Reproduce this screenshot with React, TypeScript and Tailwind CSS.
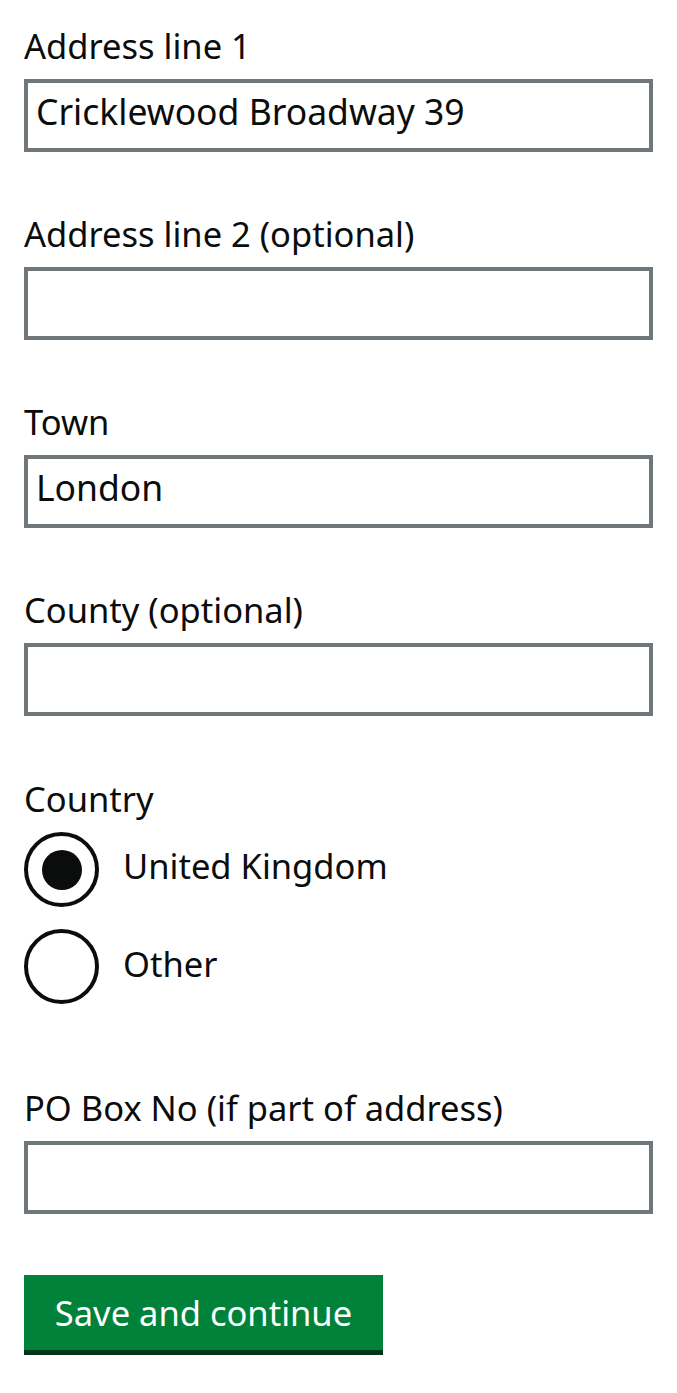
import React from 'react';

const font = { fontFamily: '"Noto Sans", Arial, sans-serif' };

function TextField({ label, value, className }: { label: string; value?: string; className?: string }) {
  return (
    <div className={className}>
      <label className="block text-[34.5px] leading-[44px] text-[#0b0c0c]">{label}</label>
      <input
        type="text"
        defaultValue={value}
        className="mt-[11px] block h-[73px] w-full border-4 border-[#6f777b] bg-white px-[8px] pt-0 pb-[9px] text-[35.5px] leading-[44px] text-[#0b0c0c] outline-none"
      />
    </div>
  );
}

function Radio({ label, checked, textClass }: { label: string; checked?: boolean; textClass: string }) {
  return (
    <div className="flex h-[75px] items-center">
      <div className="flex h-[75px] w-[75px] shrink-0 items-center justify-center rounded-full border-4 border-[#0b0c0c] bg-white">
        {checked && <div className="h-[40px] w-[40px] rounded-full bg-[#0b0c0c]" />}
      </div>
      <span className={`ml-[24px] text-[34.5px] leading-[44px] text-[#0b0c0c] ${textClass}`}>{label}</span>
    </div>
  );
}

export default function App() {
  return (
    <div className="min-h-screen bg-white px-[24px] pt-[24px] pb-[38px]" style={font}>
      <TextField label="Address line 1" value="Cricklewood Broadway 39" />
      <TextField label="Address line 2 (optional)" className="mt-[60px]" />
      <TextField label="Town" value="London" className="mt-[60px]" />
      <TextField label="County (optional)" className="mt-[60px]" />

      {/* Country */}
      <div className="mt-[61px]">
        <div className="text-[34.5px] leading-[44px] text-[#0b0c0c]">Country</div>
        <div className="mt-[11px] flex flex-col gap-[22px]">
          <Radio label="United Kingdom" checked textClass="pb-[8px]" />
          <Radio label="Other" textClass="pb-[6px]" />
        </div>
      </div>

      <TextField label="PO Box No (if part of address)" className="mt-[82px]" />

      <button className="mt-[61px] flex h-[75px] w-[359px] items-center justify-center bg-[#00823b] text-[34.5px] leading-[44px] text-white shadow-[0_5px_0_#003618]">
        Save and continue
      </button>
    </div>
  );
}
